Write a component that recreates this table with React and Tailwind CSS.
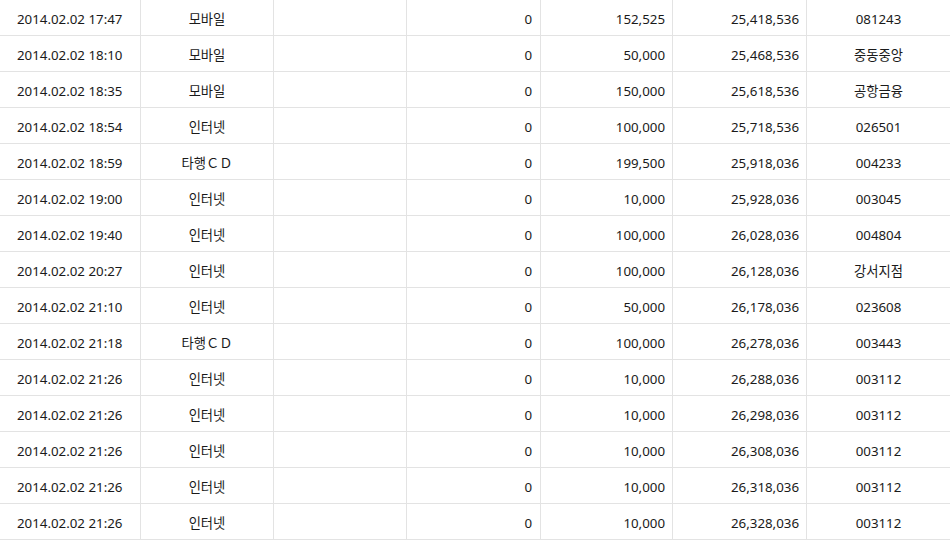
const rows = [
  ['2014.02.02 17:47', '모바일', '0', '152,525', '25,418,536', '081243'],
  ['2014.02.02 18:10', '모바일', '0', '50,000', '25,468,536', '중동중앙'],
  ['2014.02.02 18:35', '모바일', '0', '150,000', '25,618,536', '공항금융'],
  ['2014.02.02 18:54', '인터넷', '0', '100,000', '25,718,536', '026501'],
  ['2014.02.02 18:59', '타행ＣＤ', '0', '199,500', '25,918,036', '004233'],
  ['2014.02.02 19:00', '인터넷', '0', '10,000', '25,928,036', '003045'],
  ['2014.02.02 19:40', '인터넷', '0', '100,000', '26,028,036', '004804'],
  ['2014.02.02 20:27', '인터넷', '0', '100,000', '26,128,036', '강서지점'],
  ['2014.02.02 21:10', '인터넷', '0', '50,000', '26,178,036', '023608'],
  ['2014.02.02 21:18', '타행ＣＤ', '0', '100,000', '26,278,036', '003443'],
  ['2014.02.02 21:26', '인터넷', '0', '10,000', '26,288,036', '003112'],
  ['2014.02.02 21:26', '인터넷', '0', '10,000', '26,298,036', '003112'],
  ['2014.02.02 21:26', '인터넷', '0', '10,000', '26,308,036', '003112'],
  ['2014.02.02 21:26', '인터넷', '0', '10,000', '26,318,036', '003112'],
  ['2014.02.02 21:26', '인터넷', '0', '10,000', '26,328,036', '003112'],
];

export default function App() {
  return (
    <div
      className="w-[950px] h-[543px] overflow-hidden bg-white text-[13.3px] text-[#1a1a1a]"
      style={{ fontFamily: '"Noto Sans", "Noto Sans CJK KR", sans-serif' }}
    >
      {rows.map((r, i) => (
        <div key={i} className="flex h-[36px] border-b border-[#e3e3e3]">
          <div className="w-[141px] pt-[4px] flex items-center pl-[17px] border-r border-[#e3e3e3]">{r[0]}</div>
          <div className="w-[133px] pt-[4px] flex items-center justify-center border-r border-[#e3e3e3]">{r[1]}</div>
          {/* masked column */}
          <div className="w-[133px] border-r border-[#e3e3e3]"></div>
          <div className="w-[134px] pt-[4px] flex items-center justify-end pr-[8px] border-r border-[#e3e3e3]">{r[2]}</div>
          <div className="w-[132px] pt-[4px] flex items-center justify-end pr-[7px] border-r border-[#e3e3e3]">{r[3]}</div>
          <div className="w-[134px] pt-[4px] flex items-center justify-end pr-[7px] border-r border-[#e3e3e3]">{r[4]}</div>
          <div className="w-[143px] pt-[4px] flex items-center justify-center">{r[5]}</div>
        </div>
      ))}
    </div>
  );
}
